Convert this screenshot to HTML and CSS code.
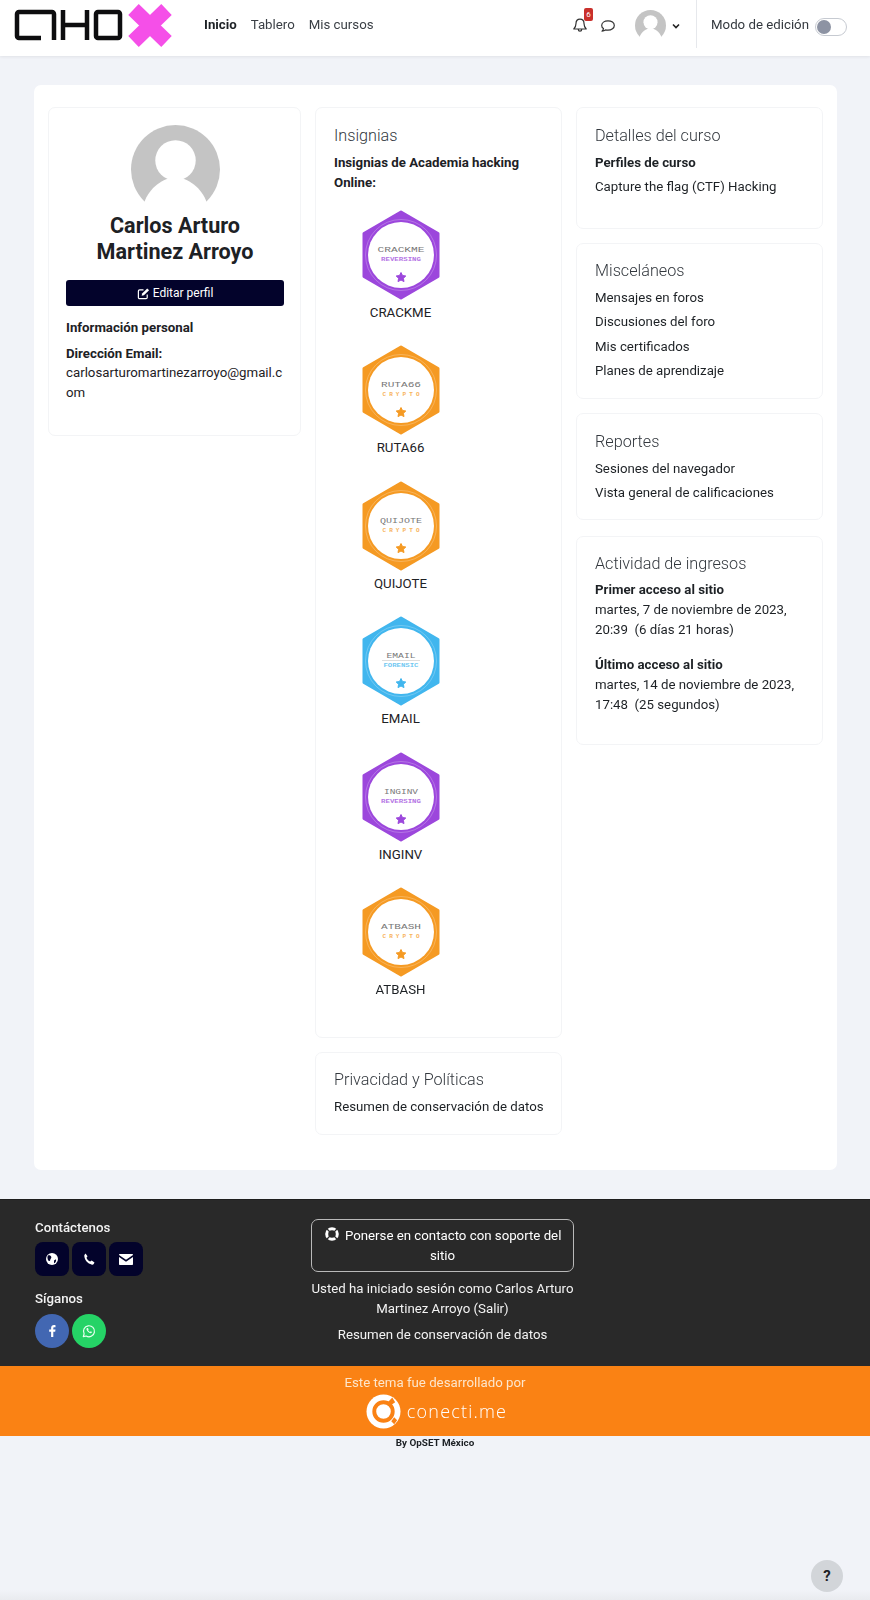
FILE: index.html
```html
<!DOCTYPE html>
<html lang="es">
<head>
<meta charset="utf-8">
<title>Perfil</title>
<link rel="stylesheet" href="styles.css">
</head>
<body>
<svg class="defs" width="0" height="0" aria-hidden="true">
  <symbol id="hex" viewBox="0 0 78 90">
    <polygon points="39,2 76,23.5 76,66.5 39,88 2,66.5 2,23.5" fill="currentColor" stroke="currentColor" stroke-width="3" stroke-linejoin="round"/>
    <circle cx="39" cy="45" r="35.500" fill="none" stroke="#fff" stroke-opacity=".25" stroke-width="1"/>
    <circle cx="39" cy="45" r="33" fill="#fff"/>
    <polygon points="39,62.500 40.500,65.500 43.800,66 41.400,68.300 42,71.600 39,70 36,71.600 36.600,68.300 34.200,66 37.500,65.500" fill="currentColor" stroke="currentColor" stroke-linejoin="round"/>
  </symbol>
  <symbol id="avatar" viewBox="0 0 88 88">
    <circle cx="44" cy="44" r="44" fill="#c4c4c4"/>
    <circle cx="44" cy="35" r="20" fill="#fff"/>
    <path d="M13 77C18 62 32 52 44 52S70 62 75 77V88H13z" fill="#fff"/>
  </symbol>
</svg>

<header class="topbar">
  <svg class="logo" viewBox="0 0 160 46" role="img" aria-label="Logo">
    <g fill="none" stroke="#0d0d0f" stroke-width="4.500">
      <path d="M27 35H5a2 2 0 0 1-2-2V11a2 2 0 0 1 2-2H38a2 2 0 0 1 2 2V37"/>
      <path d="M49 7V37M73 7V37M49 22H73"/>
      <rect x="82" y="9" width="24" height="26" rx="2"/>
    </g>
    <path d="M119.500 6.500 152.500 38.500M152.500 6.500 119.500 38.500" fill="none" stroke="#f54fe8" stroke-width="15"/>
  </svg>
  <nav class="nav">
    <a class="nav-link is-active">Inicio</a>
    <a class="nav-link">Tablero</a>
    <a class="nav-link">Mis cursos</a>
  </nav>
  <div class="user-tools">
    <div class="bell">
      <svg viewBox="0 0 16 16" class="tool-icon"><path d="M8 2.200c-2.500 0-4 1.800-4 4.300 0 3-1 4.200-2.200 5.500h12.400C13 10.700 12 9.500 12 6.500c0-2.500-1.500-4.300-4-4.300zM6.300 12.500c0 1 .7 1.700 1.700 1.700s1.700-.7 1.700-1.700" fill="none" stroke="#333" stroke-width="1.200" stroke-linejoin="round"/></svg>
      <span class="badge-count">6</span>
    </div>
    <svg viewBox="0 0 16 16" class="tool-icon chat"><path d="M8 2.800c-3.600 0-6.300 2-6.300 4.600 0 1.300.7 2.400 1.800 3.200-.2 1-.8 1.900-1.500 2.500 1.400 0 2.700-.5 3.500-1.200.8.200 1.600.3 2.500.3 3.600 0 6.300-2.100 6.300-4.800S11.600 2.800 8 2.800z" fill="none" stroke="#333" stroke-width="1.200" stroke-linejoin="round"/></svg>
    <svg class="avatar-small"><use href="#avatar"/></svg>
    <svg viewBox="0 0 10 10" class="chev"><path d="M2 3.500 5 6.500l3-3" fill="none" stroke="#222" stroke-width="1.600"/></svg>
    <div class="divider"></div>
    <span class="edit-label">Modo de edición</span>
    <span class="switch"><span class="knob"></span></span>
  </div>
</header>

<main class="content">
  <div class="layout">
    <section class="col">
      <article class="card profile">
        <svg class="avatar-big"><use href="#avatar"/></svg>
        <h1 class="name">Carlos Arturo<br>Martinez Arroyo</h1>
        <a class="edit-btn">
          <svg viewBox="0 0 14 14" class="edit-icon"><path d="M11 8v3.200c0 .8-.5 1.300-1.300 1.300H2.800c-.8 0-1.300-.5-1.300-1.300V4.300C1.500 3.500 2 3 2.800 3H7" fill="none" stroke="#fff" stroke-width="1.300"/><path d="M5 9.500l.5-2.500L11 1.500l2 2L7.500 9z" fill="#fff"/></svg>
          Editar perfil
        </a>
        <p class="strong info-title">Información personal</p>
        <p class="strong">Dirección Email:</p>
        <p class="email">carlosarturomartinezarroyo@gmail.com</p>
      </article>
    </section>

    <section class="col">
      <article class="card badges-card">
        <h2 class="card-title">Insignias</h2>
        <p class="strong">Insignias de Academia hacking Online:</p>
        <ul class="badges">
          <li class="badge-item purple">
            <svg class="badge-art" viewBox="0 0 78 90"><use href="#hex"/><text class="b-top" x="39" y="42" textLength="47" lengthAdjust="spacingAndGlyphs">CRACKME</text><text class="b-sub" x="39" y="51" textLength="40" lengthAdjust="spacingAndGlyphs">REVERSING</text></svg>
            <span class="badge-name">CRACKME</span>
          </li>
          <li class="badge-item orange">
            <svg class="badge-art" viewBox="0 0 78 90"><use href="#hex"/><text class="b-top" x="39" y="42" textLength="40" lengthAdjust="spacingAndGlyphs">RUTA66</text><text class="b-sub" x="39" y="51" textLength="37">CRYPTO</text></svg>
            <span class="badge-name">RUTA66</span>
          </li>
          <li class="badge-item orange">
            <svg class="badge-art" viewBox="0 0 78 90"><use href="#hex"/><text class="b-top" x="39" y="42" textLength="42" lengthAdjust="spacingAndGlyphs">QUIJOTE</text><text class="b-sub" x="39" y="51" textLength="37">CRYPTO</text></svg>
            <span class="badge-name">QUIJOTE</span>
          </li>
          <li class="badge-item blue">
            <svg class="badge-art" viewBox="0 0 78 90"><use href="#hex"/><text class="b-top" x="39" y="42" textLength="29" lengthAdjust="spacingAndGlyphs">EMAIL</text><line x1="20" x2="58" y1="44.500" y2="44.500" stroke="#bbb" stroke-width=".5"/><text class="b-sub" x="39" y="51" textLength="35" lengthAdjust="spacingAndGlyphs">FORENSIC</text></svg>
            <span class="badge-name">EMAIL</span>
          </li>
          <li class="badge-item purple">
            <svg class="badge-art" viewBox="0 0 78 90"><use href="#hex"/><text class="b-top" x="39" y="42" textLength="34" lengthAdjust="spacingAndGlyphs">INGINV</text><text class="b-sub" x="39" y="51" textLength="40" lengthAdjust="spacingAndGlyphs">REVERSING</text></svg>
            <span class="badge-name">INGINV</span>
          </li>
          <li class="badge-item orange">
            <svg class="badge-art" viewBox="0 0 78 90"><use href="#hex"/><text class="b-top" x="39" y="42" textLength="40" lengthAdjust="spacingAndGlyphs">ATBASH</text><text class="b-sub" x="39" y="51" textLength="37">CRYPTO</text></svg>
            <span class="badge-name">ATBASH</span>
          </li>
        </ul>
      </article>
      <article class="card privacy">
        <h2 class="card-title">Privacidad y Políticas</h2>
        <p class="line">Resumen de conservación de datos</p>
      </article>
    </section>

    <section class="col">
      <article class="card details">
        <h2 class="card-title">Detalles del curso</h2>
        <p class="strong line">Perfiles de curso</p>
        <p class="line">Capture the flag (CTF) Hacking</p>
      </article>
      <article class="card misc">
        <h2 class="card-title">Misceláneos</h2>
        <p class="line">Mensajes en foros</p>
        <p class="line">Discusiones del foro</p>
        <p class="line">Mis certificados</p>
        <p class="line">Planes de aprendizaje</p>
      </article>
      <article class="card reports">
        <h2 class="card-title">Reportes</h2>
        <p class="line">Sesiones del navegador</p>
        <p class="line">Vista general de calificaciones</p>
      </article>
      <article class="card activity">
        <h2 class="card-title">Actividad de ingresos</h2>
        <p class="strong">Primer acceso al sitio</p>
        <p class="para">martes, 7 de noviembre de 2023, 20:39&nbsp; (6 días 21 horas)</p>
        <p class="strong">Último acceso al sitio</p>
        <p class="para">martes, 14 de noviembre de 2023, 17:48&nbsp; (25 segundos)</p>
      </article>
    </section>
  </div>
</main>

<footer class="footer">
  <div class="footer-left">
    <h3 class="foot-title">Contáctenos</h3>
    <div class="foot-icons">
      <a class="sq-btn"><svg viewBox="0 0 16 16"><circle cx="8" cy="8" r="6" fill="#fff"/><path d="M4 4.500c1.500-.5 3 .3 3.300 1.500.3 1.300-1 1.500-1 2.700 0 1-1.500 1.800-2 .8C3.700 8.300 2.800 6 4 4.500zM10 9.500l2-1.200c.5 1.500-.5 3.500-2 4z" fill="#03032b"/></svg></a>
      <a class="sq-btn"><svg viewBox="0 0 16 16"><path d="M4.500 2.500l2 2.800-1 1.500c.5 1.700 2 3.200 3.700 3.700l1.500-1 2.800 2-.8 1.500c-.4.600-1 .8-1.700.7C6.500 12.300 3.700 9.500 3.300 5c-.1-.7.100-1.300.7-1.700z" fill="#fff"/></svg></a>
      <a class="sq-btn"><svg viewBox="0 0 16 16"><path d="M1 4c0-.6.400-1 1-1h12c.6 0 1 .4 1 1L8 8.800zM1 6v7c0 .6.400 1 1 1h12c.6 0 1-.4 1-1V6l-7 4.800z" fill="#fff"/></svg></a>
    </div>
    <h3 class="foot-title follow">Síganos</h3>
    <div class="foot-icons social">
      <a class="round-btn fb"><svg viewBox="0 0 16 16"><path d="M9.300 14V8.700h1.900l.3-2.200H9.300V5.200c0-.6.200-1 1.100-1h1.100V2.200C11.300 2.100 10.700 2 10 2 8.300 2 7.100 3.100 7.100 5v1.500H5.200v2.200h1.900V14z" fill="#fff"/></svg></a>
      <a class="round-btn wa"><svg viewBox="0 0 16 16"><path d="M2.300 13.700l.8-2.900A5.500 5.500 0 1 1 5.200 13z" fill="none" stroke="#e8fff0" stroke-width="1.200" stroke-linejoin="round"/><path d="M6 5c-.9.700-.6 2 .5 3.300S9.200 10.500 10.300 10c.7-.3.700-1 .4-1.200l-1-.5-.6.600C8.300 8.700 7.500 8 7.100 7.200l.5-.6-.5-1.300C6.900 4.900 6.400 4.800 6 5z" fill="#e8fff0"/></svg></a>
    </div>
  </div>
  <div class="footer-mid">
    <a class="support">
      <svg viewBox="0 0 16 16" class="ring"><circle cx="8" cy="8" r="5.300" fill="none" stroke="#fff" stroke-width="3"/><path d="M3 3l3 3M13 3l-3 3M3 13l3-3M13 13l-3-3" stroke="#2a2a2a" stroke-width="1.300"/></svg>
      Ponerse en contacto con soporte del sitio
    </a>
    <p class="foot-line">Usted ha iniciado sesión como Carlos Arturo Martinez Arroyo (Salir)</p>
    <p class="foot-line retention">Resumen de conservación de datos</p>
  </div>
</footer>
<div class="credit">
  <p class="credit-text">Este tema fue desarrollado por</p>
  <div class="brand">
    <svg viewBox="0 0 36 36" class="brand-mark"><circle cx="18" cy="18" r="17.500" fill="#fff"/><circle cx="18" cy="18" r="9.500" fill="none" stroke="#fa8214" stroke-width="4"/><path d="M27 3.500l3 5-6 4-2.500-3z" fill="#fa8214"/><path d="M29 24l3 3-3 4-3-3z" fill="#fa8214"/></svg>
    <span class="brand-name">conecti.me</span>
  </div>
</div>
<p class="by">By OpSET México</p>

<button class="help">?</button>
<div class="edge"></div>
</body>
</html>
```

FILE: styles.css
```css
* { box-sizing: border-box; }
html, body { margin: 0; padding: 0; }
body {
  background: #f1f3f8;
  font-family: Roboto, "Liberation Sans", sans-serif;
  font-size: 13.260px;
  line-height: 20px;
  color: #1d2125;
  min-height: 1600px;
}
p, h1, h2, h3, ul { margin: 0; padding: 0; }
.defs { position: absolute; }

.topbar {
  height: 56px;
  background: #fff;
  box-shadow: 0 1px 3px rgba(0, 0, 0, .07);
  display: flex;
  align-items: flex-start;
  padding-left: 14px;
  position: relative;
}
.logo { width: 160px; height: 46px; margin-top: 3px; flex: none; }
.nav { display: flex; gap: 14px; margin-left: 30px; margin-top: 15px; }
.nav-link { color: #3a3f45; }
.is-active { font-weight: 700; color: #1d2125; }
.user-tools { margin-left: auto; display: flex; align-items: flex-start; padding-right: 23px; }
.bell { position: relative; width: 16px; height: 16px; margin-top: 17px; }
.tool-icon { width: 16px; height: 16px; display: block; }
.chat { margin: 18px 0 0 12px; }
.badge-count {
  position: absolute;
  left: 12px;
  top: -9px;
  width: 9px;
  height: 13px;
  background: #c9302c;
  border-radius: 2px;
  color: #fff;
  font-size: 8px;
  line-height: 13px;
  text-align: center;
}
.avatar-small { width: 31px; height: 31px; margin: 10px 0 0 19px; }
.chev { width: 10px; height: 10px; margin: 21px 0 0 5px; }
.divider { width: 1px; height: 48px; background: #e6e8ec; margin-left: 15px; }
.edit-label { margin: 15px 0 0 14px; color: #33383e; }
.switch {
  width: 32px;
  height: 18px;
  border: 1px solid #c6cad1;
  border-radius: 9px;
  margin: 18px 0 0 6px;
  background: #fff;
  display: block;
  padding: 1px;
}
.knob { display: block; width: 14px; height: 14px; border-radius: 50%; background: #8d93a3; }

.content {
  margin: 29px 33px 0 34px;
  height: 1085px;
  background: #fff;
  border-radius: 7px;
  padding: 22px 14px 0;
}
.layout { display: grid; grid-template-columns: 253px 247px 247px; column-gap: 14px; align-items: start; }
.col { display: flex; flex-direction: column; gap: 14px; }
.card {
  border: 1px solid #f3f4f6;
  border-radius: 7px;
  background: #fff;
  padding: 14px 12px 0 18px;
}
.card-title { font-size: 16.200px; font-weight: 300; line-height: 28px; color: #33383e; margin-bottom: 2.500px; }
.strong { font-weight: 700; }
.line { margin-bottom: 4.500px; }

.profile { height: 329px; padding: 17px 16px 0 17px; }
.avatar-big { width: 89px; height: 89px; display: block; margin: 0 auto; }
.name { font-size: 21.600px; line-height: 26.500px; font-weight: 700; text-align: center; margin-top: -1.500px; color: #1d2125; }
.edit-btn {
  display: flex;
  align-items: center;
  justify-content: center;
  gap: 3px;
  height: 26px;
  margin-top: 14.500px;
  background: #03032b;
  color: #fff;
  border-radius: 3px;
  font-size: 12px;
}
.edit-icon { width: 13px; height: 13px; }
.info-title { margin: 12px 0 6px; }
.email { word-break: break-all; margin-top: -1px; }

.badges-card { height: 931px; padding-right: 18px; }
.badges { list-style: none; margin-top: 17px; }
.badge-item { height: 135.500px; width: 133px; display: flex; flex-direction: column; align-items: center; text-align: center; }
.badge-art { width: 78px; height: 90px; display: block; flex: none; }
.badge-name { line-height: 24px; margin-top: 1px; }
.purple { color: #9c47dc; }
.orange { color: #f59a23; }
.blue { color: #41b6ee; }
.badge-item .badge-name { color: #1d2125; }
.b-top, .b-sub { font-family: "Liberation Mono", monospace; text-anchor: middle; }
.b-top { font-size: 8px; fill: #777; }
.b-sub { font-size: 6px; font-weight: 700; fill: currentColor; opacity: .75; }

.privacy { height: 83px; padding-top: 13px; }
.details { height: 122px; }
.misc { height: 156px; padding-top: 13px; }
.reports { height: 107px; }
.activity { height: 209px; margin-top: 2px; padding-top: 13px; }
.activity .card-title { margin-bottom: 1.500px; }
.para { margin-bottom: 15px; }

.footer {
  margin-top: 29px;
  height: 167px;
  background: #292929;
  color: #fff;
  display: flex;
  padding: 16px 0 0 35px;
  border-top: 1px solid #1e1e1e;
}
.footer-left { width: 276px; flex: none; }
.foot-title { font-size: 13.260px; line-height: 24px; font-weight: 500; color: #f3f3f3; }
.follow { margin-top: 11px; }
.foot-icons { display: flex; gap: 3px; margin-top: 2px; }
.social { margin-top: 3px; }
.sq-btn, .round-btn {
  width: 34px;
  height: 34px;
  display: flex;
  align-items: center;
  justify-content: center;
}
.sq-btn { background: #03032b; border-radius: 8px; }
.round-btn { border-radius: 50%; }
.sq-btn svg, .round-btn svg { width: 16px; height: 16px; }
.fb { background: #4267b2; }
.wa { background: #25d366; }
.footer-mid { width: 263px; flex: none; text-align: center; padding-top: 3px; }
.support {
  display: block;
  border: 1px solid #b9b9b9;
  border-radius: 7px;
  padding: 6px 8px 0;
  height: 53px;
}
.ring { width: 16px; height: 16px; vertical-align: -2px; margin-right: 2px; }
.foot-line { margin-top: 7px; color: #f3f3f3; }
.retention { margin-top: 6px; }

.credit { height: 70px; background: #fa8214; color: #fff; text-align: center; }
.credit-text { font-size: 13.260px; line-height: 33px; color: #fde6cc; }
.brand { display: flex; justify-content: center; align-items: center; gap: 6px; margin-top: -5px; padding-left: 3px; }
.brand-mark { width: 35px; height: 35px; }
.brand-name { font-family: "Open Sans", sans-serif; font-size: 18px; font-weight: 300; letter-spacing: 1.200px; line-height: 35px; }
.by { text-align: center; font-size: 9.900px; font-weight: 700; line-height: 14px; color: #1d2125; }

.help {
  position: fixed;
  right: 27px;
  bottom: 8px;
  width: 32px;
  height: 32px;
  border: 0;
  border-radius: 50%;
  background: #d2d5d9;
  color: #1d2125;
  font: 700 15px/32px Roboto, sans-serif;
  padding: 0;
}
.edge { position: fixed; left: 0; right: 0; bottom: 0; height: 10px; background: linear-gradient(#f1f3f8, #e9ebef); z-index: -1; }
```
